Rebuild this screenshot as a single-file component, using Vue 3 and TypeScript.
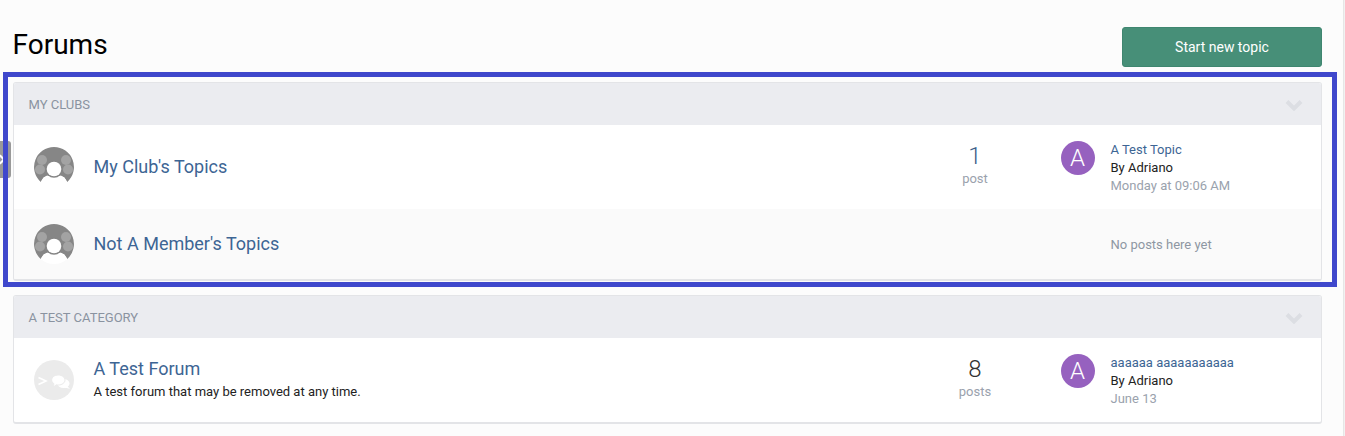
<template>
  <div class="page">
    <header class="page-head">
      <h1 class="page-title">Forums</h1>
      <a class="btn-new">Start new topic</a>
    </header>

    <div class="side-tab"><span class="side-tab__arrow"></span></div>

    <div class="highlight">
      <section class="cat">
        <div class="cat__head">
          <span>MY CLUBS</span>
          <svg class="cat__toggle" viewBox="0 0 18 12" width="18" height="12">
            <path d="M2 2.500 9 9.500 16 2.500" fill="none" stroke="#dcdee3" stroke-width="4" />
          </svg>
        </div>

        <div class="row row--first">
          <svg class="club-icon" viewBox="0 0 40 40" width="40" height="40">
            <path :d="clubDisc" fill="#868686" />
            <circle v-for="c in clubDots" :key="c[0]" :cx="c[0]" :cy="c[1]" r="5" fill="#a3a3a3" />
            <path :d="clubBody" fill="#fff" />
            <circle cx="20" cy="22" r="8.700" fill="#868686" />
            <circle cx="20" cy="22" r="7.300" fill="#fff" />
          </svg>
          <a class="row__title">My Club's Topics</a>
          <div class="stat">
            <div class="stat__num stat__num--blue">1</div>
            <div class="stat__label">post</div>
          </div>
          <div class="last">
            <div class="avatar">A</div>
            <div class="last__text">
              <a class="last__topic">A Test Topic</a>
              <div class="last__by">By Adriano</div>
              <div class="last__date">Monday at 09:06 AM</div>
            </div>
          </div>
        </div>

        <div class="row row--alt">
          <svg class="club-icon" viewBox="0 0 40 40" width="40" height="40">
            <path :d="clubDisc" fill="#868686" />
            <circle v-for="c in clubDots" :key="c[0]" :cx="c[0]" :cy="c[1]" r="5" fill="#a3a3a3" />
            <path :d="clubBody" fill="#fff" />
            <circle cx="20" cy="22" r="8.700" fill="#868686" />
            <circle cx="20" cy="22" r="7.300" fill="#fff" />
          </svg>
          <a class="row__title">Not A Member's Topics</a>
          <div class="last last--empty">No posts here yet</div>
        </div>
      </section>
    </div>

    <section class="cat cat--second">
      <div class="cat__head">
        <span>A TEST CATEGORY</span>
        <svg class="cat__toggle" viewBox="0 0 18 12" width="18" height="12">
          <path d="M2 2.500 9 9.500 16 2.500" fill="none" stroke="#dcdee3" stroke-width="4" />
        </svg>
      </div>
      <div class="row row--first">
        <svg class="club-icon" viewBox="0 0 40 40" width="40" height="40">
          <circle cx="20" cy="20" r="20" fill="#ebebeb" />
          <path d="M4.500 17.500 12 21 4.500 24.500" fill="none" stroke="#fff" stroke-width="1.600" />
          <ellipse cx="29.500" cy="23.500" rx="6" ry="4.600" fill="#fff" />
          <path d="M33 26 36 28.700 30 27.500z" fill="#fff" />
          <path d="M24.300 15c3.700 0 6.700 2.200 6.700 5s-3 5-6.700 5c-.7 0-1.300 0-1.900-.2-1 .9-2.200 1.600-3.700 1.900.8-.9 1.200-2 1.200-3-1.400-.9-2.300-2.200-2.300-3.700 0-2.800 3-5 6.700-5z" fill="#fff" stroke="#ebebeb" stroke-width="1" />
        </svg>
        <div class="row__main">
          <a class="row__title">A Test Forum</a>
          <div class="row__desc">A test forum that may be removed at any time.</div>
        </div>
        <div class="stat">
          <div class="stat__num">8</div>
          <div class="stat__label">posts</div>
        </div>
        <div class="last">
          <div class="avatar">A</div>
          <div class="last__text">
            <a class="last__topic">aaaaaa aaaaaaaaaaa</a>
            <div class="last__by">By Adriano</div>
            <div class="last__date">June 13</div>
          </div>
        </div>
      </div>
    </section>
    <div class="scroll-edge"></div>
  </div>
</template>

<script setup lang="ts">
const clubDisc = 'M20 0a20 20 0 0 1 13.200 35L30 30h-20l-3.200 5A20 20 0 0 1 20 0z'
const clubBody = 'M6.800 35c1.500-3 3.500-6 7.200-6.500h12c3.700.5 5.700 3.500 7.200 6.500a20 20 0 0 1-26.400 0z'
const clubDots: number[][] = [
  [8, 13],
  [32, 13],
  [6, 22.500],
  [34, 22.500],
]
</script>

<style>
html,
body {
  margin: 0;
  background: #fcfcfc;
  overflow: hidden;
}
</style>

<style scoped>
.page {
  position: relative;
  height: 436px;
  box-sizing: border-box;
  font-family: Roboto, "Liberation Sans", sans-serif;
  overflow: hidden;
}

.page-head {
  height: 72px;
  box-sizing: border-box;
  padding: 27px 23px 0 12.500px;
  display: flex;
  justify-content: space-between;
  align-items: flex-start;
}

.page-title {
  margin: 0;
  font-size: 28px;
  font-weight: 400;
  line-height: 36px;
  color: #000;
}

.btn-new {
  width: 200px;
  height: 40px;
  box-sizing: border-box;
  display: flex;
  align-items: center;
  justify-content: center;
  background: #478f78;
  border: 1px solid #3f8670;
  border-radius: 3px;
  color: #fff;
  font-size: 14px;
}

.side-tab {
  position: absolute;
  left: 0;
  top: 141px;
  width: 11px;
  height: 37px;
  background: #999;
  border-radius: 0 3px 3px 0;
}

.side-tab__arrow {
  position: absolute;
  left: -3px;
  top: 15px;
  width: 5px;
  height: 5px;
  border-top: 2px solid #fff;
  border-right: 2px solid #fff;
  transform: rotate(45deg);
}

.highlight {
  position: relative;
  margin-left: 3px;
  width: 1334px;
  height: 215px;
  box-sizing: border-box;
  border: 5px solid #3f48cc;
  padding: 5px 10px 0 5px;
}

.cat {
  background: #fff;
  border: 1px solid #e3e4e7;
  border-bottom-width: 2px;
  border-radius: 3px;
  overflow: hidden;
}

.cat--second {
  margin: 8px 23px 0 13px;
}

.cat__head {
  height: 42px;
  box-sizing: border-box;
  padding: 1px 18px 0 14.500px;
  background: #ebecf0;
  display: flex;
  align-items: center;
  justify-content: space-between;
  color: #8a93a0;
  font-size: 13px;
  font-weight: 400;
}

.cat__toggle {
  display: block;
}

.row {
  display: flex;
  align-items: center;
  padding: 0 0 0 20px;
  height: 84px;
}

.row--alt {
  height: 70px;
  background: #fafafa;
}

.club-icon {
  flex: none;
  margin-right: 19.500px;
}

.row__main {
  flex: 1;
  margin-top: -2px;
}

.row__title {
  color: #3d6594;
  font-size: 18px;
  line-height: 24px;
  flex: 1;
}

.row__desc {
  color: #222;
  font-size: 13px;
  line-height: 18px;
  margin-top: 2px;
}

.stat {
  width: 100px;
  text-align: center;
  margin-right: 35.500px;
  margin-top: -4px;
}

.stat__num {
  font-size: 24px;
  font-weight: 300;
  line-height: 28px;
  color: #333;
}

.stat__num--blue {
  color: #3d5f8a;
}

.stat__label {
  font-size: 13px;
  line-height: 18px;
  color: #9aa2ad;
}

.last {
  width: 260.500px;
  display: flex;
  align-items: flex-start;
}

.last--empty {
  box-sizing: border-box;
  padding-left: 50px;
  font-size: 13px;
  color: #8e97a3;
}

.avatar {
  flex: none;
  width: 34px;
  height: 34px;
  border-radius: 50%;
  background: #9661bf;
  color: #fff;
  font-size: 24px;
  font-weight: 300;
  line-height: 34px;
  text-align: center;
  margin: 1px 16px 0 0;
}

.last__text {
  font-size: 13px;
  line-height: 18px;
  margin-top: 1px;
}

.last__topic {
  color: #3d6594;
  display: block;
}

.last__by {
  color: #222;
}

.last__date {
  color: #9aa2ad;
}

.scroll-edge {
  position: absolute;
  top: 0;
  right: 0;
  width: 2px;
  height: 100%;
  background: #f1f1f1;
  border-left: 1px solid #e6e6e6;
  box-sizing: border-box;
}
</style>
